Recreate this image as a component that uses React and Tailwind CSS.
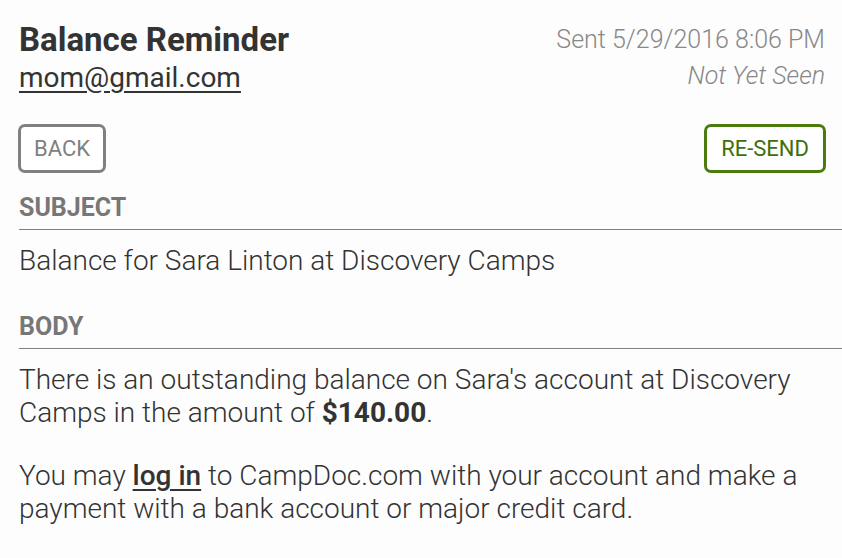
export default function App() {
    return (
        <div className="min-h-[558px] bg-[#fdfdfd] font-['Roboto',sans-serif] text-[#333] pl-[19px] pt-[19px]">
            {/* ── header ── */}
            <header className="flex justify-between pr-[17px]">
                <div>
                    <h1 className="text-[33px] leading-[41px] font-bold text-[#333]">Balance Reminder</h1>
                    <a href="#" className="block text-[28px] leading-[36px] underline underline-offset-[4px]">
                        mom@gmail.com
                    </a>
                </div>
                <div className="text-right text-[25px] font-light text-[#888] pt-[3px]">
                    <p className="leading-[36px]">Sent 5/29/2016 8:06 PM</p>
                    <p className="leading-[36px] italic">Not Yet Seen</p>
                </div>
            </header>

            <div className="flex justify-between pr-[16px] mt-[28px] -ml-px">
                <button className="h-[49px] px-[13px] border-[3px] border-[#808080] rounded-[7px] text-[22px] text-[#808080] bg-white">
                    BACK
                </button>
                <button className="h-[49px] px-[14px] border-[3px] border-[#4b7a0e] rounded-[7px] text-[22px] text-[#3f6f08] bg-white">
                    RE-SEND
                </button>
            </div>

            {/* ── subject ── */}
            <section className="mt-[20px]">
                <h2 className="text-[25px] leading-[30px] font-bold text-[#777] border-b border-[#808080] pb-[6px]">SUBJECT</h2>
                <p className="text-[28px] font-light leading-[36px] mt-[13px]">
                    Balance for Sara Linton at Discovery Camps
                </p>
            </section>

            {/* ── body ── */}
            <section className="mt-[33px]">
                <h2 className="text-[25px] leading-[30px] font-bold text-[#777] border-b border-[#808080] pb-[6px]">BODY</h2>
                <div className="text-[28px] font-light leading-[33px] pr-[17px] mt-[14px]">
                    <p>
                        There is an outstanding balance on Sara's account at Discovery Camps in the amount of{' '}
                        <strong className="font-bold">$140.00</strong>.
                    </p>
                    <p className="mt-[30px]">
                        You may{' '}
                        <a href="#" className="font-medium underline underline-offset-[4px]">log in</a>{' '}
                        to CampDoc.com with your account and make a payment with a bank account or major credit card.
                    </p>
                </div>
            </section>
        </div>
    );
}
